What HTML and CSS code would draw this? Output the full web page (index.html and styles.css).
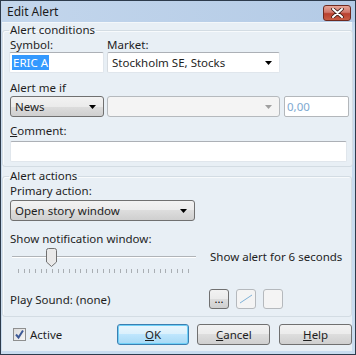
FILE: index.html
```html
<!DOCTYPE html>
<html lang="en">
<head>
    <meta charset="UTF-8">
    <title>Edit Alert</title>
    <link rel="stylesheet" href="styles.css">
</head>
<body>
<div class="window">
    <div class="titlebar">
        <span class="title">Edit Alert</span>
        <button class="close">
            <svg width="15" height="10" viewBox="0 0 15 10"><path d="M3 1 L12 9 M12 1 L3 9" stroke="#3a1a14" stroke-width="3.6" fill="none" stroke-linecap="round"/><path d="M3 1 L12 9 M12 1 L3 9" stroke="#fff" stroke-width="2" fill="none" stroke-linecap="round"/></svg>
        </button>
    </div>
    <div class="client">
        <fieldset class="group first">
            <legend>Alert conditions</legend>
            <div class="row">
                <div class="field w-sym">
                    <label>Symbol:</label>
                    <div class="textbox"><span class="selected">ERIC A</span></div>
                </div>
                <div class="field w-mkt">
                    <label>Market:</label>
                    <div class="combo white">Stockholm SE, Stocks
                        <svg class="arrow" width="7" height="4" viewBox="0 0 7 4"><path d="M0 0 H7 L3.5 4 Z" fill="#000"/></svg>
                    </div>
                </div>
            </div>
            <label class="spaced">Alert me if</label>
            <div class="row">
                <div class="combo button w-sym">News
                    <svg class="arrow" width="7" height="4" viewBox="0 0 7 4"><path d="M0 0 H7 L3.5 4 Z" fill="#000"/></svg>
                </div>
                <div class="combo disabled w-mkt">
                    <svg class="arrow" width="7" height="4" viewBox="0 0 7 4"><path d="M0 0 H7 L3.5 4 Z" fill="#a0a0a0"/></svg>
                </div>
                <div class="textbox value">0,00</div>
            </div>
            <label class="comment"><u>C</u>omment:</label>
            <div class="textbox wide"></div>
        </fieldset>

        <fieldset class="group second">
            <legend>Alert actions</legend>
            <label class="first-label">Primary action:</label>
            <div class="combo button w-action">Open story window
                <svg class="arrow" width="7" height="4" viewBox="0 0 7 4"><path d="M0 0 H7 L3.5 4 Z" fill="#000"/></svg>
            </div>
            <label class="notify">Show notification window:</label>
            <div class="slider-row">
                <div class="slider">
                    <div class="track"></div>
                    <svg class="thumb" width="11" height="19" viewBox="0 0 11 19"><path d="M0.5 2.5 Q0.5 0.5 2.5 0.5 H8.5 Q10.5 0.5 10.5 2.5 V14 L5.5 18.5 L0.5 14 Z" fill="#e9e9e9" stroke="#707070"/></svg>
                    <div class="ticks"></div>
                </div>
                <span class="slider-text">Show alert for 6 seconds</span>
            </div>
            <div class="sound-row">
                <span class="sound-label">Play Sound:</span>
                <span class="sound-value">(none)</span>
                <div class="mini-buttons">
                    <button class="mini">...</button>
                    <button class="mini off">
                        <svg width="14" height="10" viewBox="0 0 14 10"><path d="M1 9 L13 1" stroke="#7fb2d8" stroke-width="1"/></svg>
                    </button>
                    <button class="mini off"></button>
                </div>
            </div>
        </fieldset>

        <div class="footer">
            <div class="check">
                <span class="box">
                    <svg width="11" height="11" viewBox="0 0 11 11"><path d="M2 5.5 L4.5 8.5 L9 1.5" stroke="#3e5a96" stroke-width="2" fill="none"/></svg>
                </span>
                <span>Active</span>
            </div>
            <button class="btn default"><u>O</u>K</button>
            <button class="btn"><u>C</u>ancel</button>
            <button class="btn help"><u>H</u>elp</button>
        </div>
    </div>
</div>
</body>
</html>
```

FILE: styles.css
```css
body {
  margin: 0;
  padding: 0;
  font-family: "Noto Sans", "Open Sans", sans-serif;
  font-size: 11.5px;
  color: #1e1e1e;
  background-color: #ffffff;
}

.window {
  width: 356px;
  height: 355px;
  box-sizing: border-box;
  border: 1px solid #2d3b4c;
  background: linear-gradient(to bottom, #b5cde8, #c7daee 30px, #c9dcef);
  display: flex;
  flex-direction: column;
}

.titlebar {
  height: 21px;
  display: flex;
  align-items: center;
  justify-content: space-between;
  padding: 0 4px 0 6px;
  background: linear-gradient(to right, #c3d6ec, #b4cbe6);
}

.title {
  font-size: 12px;
  color: #1a1a1a;
}

.close {
  width: 28px;
  height: 16px;
  margin-top: 2px;
  padding: 0;
  border: 1px solid #6e2a20;
  border-radius: 3px;
  background: linear-gradient(to bottom, #e7a597, #d0766a 45%, #b9402f 55%, #c85d44);
  display: flex;
  align-items: center;
  justify-content: center;
}

.client {
  flex: 1;
  margin: 0 3px 3px 1px;
  background-color: #e8eff5;
  border-top: 1px solid #f3f7fa;
  display: flex;
  flex-direction: column;
}

label {
  display: block;
  line-height: 14px;
  white-space: nowrap;
}

.group {
  margin: 0;
  border: 1px solid #d3dce3;
  border-radius: 3px;
  box-shadow: inset 1px 1px 0 #f7fafc;
  padding: 0 3px 4px 7px;
}

.group legend {
  padding: 0 1px;
  margin-left: -1px;
  line-height: 14px;
}

.group.first {
  margin-top: 0;
}

.group.second {
  margin-top: 2px;
  padding-bottom: 7px;
}

.row {
  display: flex;
  gap: 3px;
}

.field label {
  margin-top: 1px;
}

.w-sym {
  width: 94px;
}

.w-mkt {
  width: 173px;
}

.w-action {
  width: 185px;
}

.textbox {
  height: 21px;
  box-sizing: border-box;
  background-color: #ffffff;
  border: 1px solid #e0e6ec;
  border-top-color: #acb0b6;
  border-radius: 2px;
  padding: 0 2px;
  display: flex;
  align-items: center;
}

.field .textbox {
  margin-left: -1px;
}

.selected {
  background-color: #3399ff;
  color: #ffffff;
  line-height: 15px;
  padding: 0 1px;
}

.textbox.value {
  width: 65px;
  margin-left: 1px;
  border-color: #b3b7bb;
  color: #7ea9d1;
}

.textbox.wide {
  width: 337px;
  margin-top: 3px;
}

.combo {
  height: 21px;
  box-sizing: border-box;
  display: flex;
  align-items: center;
  padding: 0 0 0 4px;
  border-radius: 3px;
  white-space: nowrap;
}

.combo .arrow {
  margin-left: auto;
  margin-right: 7px;
}

.combo.white {
  background-color: #ffffff;
  border: 1px solid #e0e6ec;
  border-top-color: #acb0b6;
  border-left-color: #d6dbe0;
  border-radius: 2px;
}

.combo.button {
  border: 1px solid #707070;
  background: linear-gradient(to bottom, #f2f2f2, #ebebeb 50%, #dddddd 50%, #cfcfcf);
}

.combo.disabled {
  border: 1px solid #b5b9bd;
  background-color: #f4f4f4;
}

.spaced {
  margin-top: 8px;
  margin-bottom: 1px;
}

.comment {
  margin-top: 7px;
}

.first-label {
  margin-top: 1px;
}

.notify {
  margin-top: 11px;
}

.combo.w-action {
  margin-top: 2px;
}

.slider-row {
  display: flex;
  align-items: flex-start;
  height: 30px;
}

.slider {
  width: 184px;
  height: 30px;
  flex-shrink: 0;
  position: relative;
  margin-left: 2px;
}

.track {
  position: absolute;
  left: 0;
  right: 0;
  top: 10px;
  height: 1px;
  background-color: #b0b4b8;
  border-bottom: 1px solid #ffffff;
}

.thumb {
  position: absolute;
  left: 34px;
  top: 2px;
}

.ticks {
  position: absolute;
  left: 6px;
  right: 4px;
  top: 23px;
  height: 4px;
  background: repeating-linear-gradient(to right, #a9aeb3 0, #a9aeb3 1px, transparent 1px, transparent 5.67px);
}

.slider-text {
  margin-left: 14px;
  margin-top: 3px;
  white-space: nowrap;
}

.sound-row {
  display: flex;
  align-items: center;
  margin-top: 13px;
  height: 20px;
  white-space: nowrap;
}

.sound-label {
  width: 66px;
  flex-shrink: 0;
}

.sound-value {
  width: 133px;
  flex-shrink: 0;
}

.mini-buttons {
  display: flex;
  gap: 7px;
}

.mini {
  width: 20px;
  height: 20px;
  box-sizing: border-box;
  padding: 0;
  border: 1px solid #707070;
  border-radius: 3px;
  background: linear-gradient(to bottom, #f2f2f2, #ebebeb 50%, #dddddd 50%, #cfcfcf);
  font-family: "Noto Sans", sans-serif;
  font-size: 11px;
  line-height: 10px;
  display: flex;
  align-items: center;
  justify-content: center;
}

.mini.off {
  border-color: #b5b9bd;
  background: #f4f4f4;
}

.footer {
  display: flex;
  align-items: center;
  margin-top: 7px;
  padding-left: 11px;
}

.check {
  display: flex;
  align-items: center;
  gap: 4px;
  width: 104px;
}

.box {
  width: 13px;
  height: 13px;
  box-sizing: border-box;
  border: 1px solid #8e8f8f;
  background: linear-gradient(135deg, #dcdcdc, #f6f6f6);
  display: flex;
  align-items: center;
  justify-content: center;
}

.btn {
  width: 73px;
  height: 21px;
  padding: 0;
  margin-right: 8px;
  border: 1px solid #707070;
  border-radius: 3px;
  background: linear-gradient(to bottom, #f2f2f2, #ebebeb 50%, #dddddd 50%, #cfcfcf);
  font-family: "Noto Sans", sans-serif;
  font-size: 11.5px;
  color: #1e1e1e;
}

.btn.default {
  border-color: #3c7fb1;
  background: linear-gradient(to bottom, #eaf6fd, #d9f0fc 50%, #bee6fd 50%, #a7d9f5);
  box-shadow: inset 0 0 0 1px #6fd0f7;
}

.btn.help {
  margin-left: 1px;
  margin-right: 0;
}
```
